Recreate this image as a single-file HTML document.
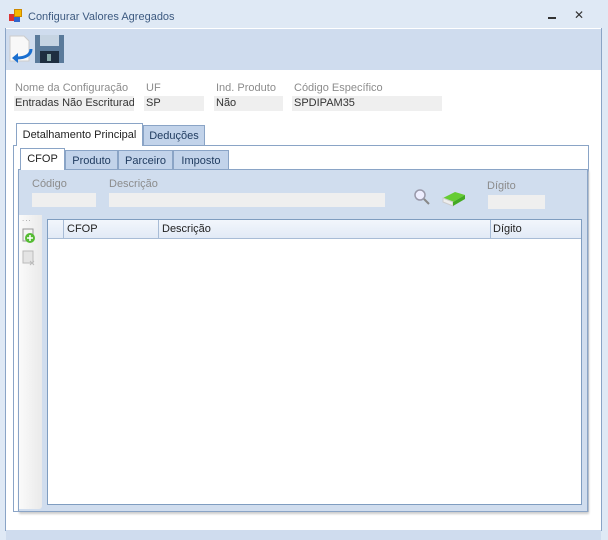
<!DOCTYPE html>
<html><head><meta charset="utf-8"><style>
*{margin:0;padding:0;box-sizing:border-box}
body{width:608px;height:540px;background:#dfe9f5;font-family:"Liberation Sans",sans-serif;font-size:11px;position:relative;overflow:hidden;color:#333}
.a{position:absolute}
.lbl{color:#8c8c8c;font-size:11px}
.fld{background:#efefef}
.tab{position:absolute;border:1px solid #8aa4c6;border-bottom:none;background:#c2d3ea;color:#1e3a5e;font-size:11px;text-align:center;padding-top:4px}
</style></head><body>
<div class="a" style="left:9px;top:9px;width:14px;height:14px">
<div class="a" style="left:0;top:5px;width:7px;height:7px;background:#d33"></div>
<div class="a" style="left:5px;top:0;width:8px;height:8px;background:#f5b800;border:1px solid #c80"></div>
<div class="a" style="left:5px;top:8px;width:6px;height:5px;background:#36c"></div>
</div>
<div class="a" style="left:28px;top:11px;color:#3d5a80;font-size:11px">Configurar Valores Agregados</div>
<div class="a" style="left:548px;top:17px;width:8px;height:2px;background:#333"></div>
<div class="a" style="left:574px;top:8px;font-size:12px;color:#333">✕</div>
<div class="a" style="left:5px;top:28px;width:597px;height:503px;background:#fff;border-left:1px solid #8aa4c6;border-right:1px solid #8aa4c6"></div>
<div class="a" style="left:6px;top:29px;width:595px;height:41px;background:#cfdcee"></div>
<svg class="a" style="left:7px;top:33px" width="60" height="32">
<path d="M3 3h14l5 5v20H3z" fill="#f8f8f8" stroke="#ccc"/>
<path d="M24 16c0 6-6 9-14 9" stroke="#1a6fd0" stroke-width="3" fill="none"/><path d="M5 25l6-5v10z" fill="#1a6fd0"/>
<rect x="28" y="2" width="29" height="28" fill="#5a7a9a"/><rect x="33" y="2" width="19" height="11" fill="#c6d4e2"/><rect x="33" y="18" width="19" height="12" fill="#1e2e40"/><rect x="40" y="21" width="4" height="7" fill="#8aa"/>
</svg>
<div class="a lbl" style="left:15px;top:82px">Nome da Configuração</div>
<div class="a lbl" style="left:146px;top:82px">UF</div>
<div class="a lbl" style="left:216px;top:82px">Ind. Produto</div>
<div class="a lbl" style="left:294px;top:82px">Código Específico</div>
<div class="a fld" style="left:14px;top:96px;width:120px;height:15px;overflow:hidden;white-space:nowrap;padding:1px 1px">Entradas Não Escriturada</div>
<div class="a fld" style="left:144px;top:96px;width:60px;height:15px;padding:1px 2px">SP</div>
<div class="a fld" style="left:214px;top:96px;width:69px;height:15px;padding:1px 2px">Não</div>
<div class="a fld" style="left:292px;top:96px;width:150px;height:15px;padding:1px 2px">SPDIPAM35</div>
<div class="a" style="left:13px;top:145px;width:576px;height:367px;border:1px solid #8aa4c6;background:#fff"></div>
<div class="tab" style="left:16px;top:123px;width:127px;height:23px;background:#fff;padding-top:5px;color:#222">Detalhamento Principal</div>
<div class="tab" style="left:143px;top:125px;width:62px;height:20px">Deduções</div>
<div class="a" style="left:18px;top:169px;width:570px;height:343px;border:1px solid #8aa4c6;background:#d0ddee;box-shadow:1px 2px 2px #ccc"></div>
<div class="tab" style="left:20px;top:148px;width:45px;height:22px;background:#fff;color:#222">CFOP</div>
<div class="tab" style="left:65px;top:150px;width:53px;height:19px">Produto</div>
<div class="tab" style="left:118px;top:150px;width:55px;height:19px">Parceiro</div>
<div class="tab" style="left:173px;top:150px;width:56px;height:19px">Imposto</div>
<div class="a lbl" style="left:32px;top:178px">Código</div>
<div class="a lbl" style="left:109px;top:178px">Descrição</div>
<div class="a lbl" style="left:487px;top:180px">Dígito</div>
<div class="a fld" style="left:32px;top:193px;width:64px;height:14px"></div>
<div class="a fld" style="left:109px;top:193px;width:276px;height:14px"></div>
<div class="a fld" style="left:488px;top:195px;width:57px;height:14px"></div>
<svg class="a" style="left:413px;top:188px" width="56" height="20">
<circle cx="7" cy="7" r="5" fill="#eef" stroke="#99a" stroke-width="1.5"/><path d="M11 11l5 5" stroke="#888" stroke-width="2"/>
<path d="M30 10l12-6 10 3-12 7z" fill="#6c3"/><path d="M30 10l10 4v4l-10-4z" fill="#eee" stroke="#ccc"/><path d="M40 14l12-7v4l-12 7z" fill="#4a2"/>
</svg>
<div class="a" style="left:19px;top:215px;width:23px;height:294px;background:linear-gradient(90deg,#fafafa,#eaeaea);border-radius:0 0 3px 0"></div>
<div class="a" style="left:22px;top:214px;color:#999;font-size:8px;letter-spacing:1px">...</div>
<svg class="a" style="left:21px;top:228px" width="16" height="40">
<rect x="2" y="1" width="10" height="12" fill="#f4f4f4" stroke="#999"/><circle cx="9" cy="10" r="5" fill="#5b3"/><path d="M9 7v6M6 10h6" stroke="#fff" stroke-width="1.5"/>
<rect x="2" y="23" width="10" height="12" fill="#e4e4e4" stroke="#bbb"/><path d="M9 33l4 4M13 33l-4 4" stroke="#bbb"/>
</svg>
<div class="a" style="left:47px;top:219px;width:535px;height:286px;border:1px solid #7f9dc0;background:#fff"></div>
<div class="a" style="left:48px;top:220px;width:533px;height:19px;background:linear-gradient(#f2f6fc,#e2eaf6);border-bottom:1px solid #a8bcd6"></div>
<div class="a" style="left:63px;top:220px;width:1px;height:19px;background:#a8bcd6"></div>
<div class="a" style="left:158px;top:220px;width:1px;height:19px;background:#a8bcd6"></div>
<div class="a" style="left:490px;top:220px;width:1px;height:19px;background:#a8bcd6"></div>
<div class="a" style="left:67px;top:223px;color:#222">CFOP</div>
<div class="a" style="left:162px;top:223px;color:#222">Descrição</div>
<div class="a" style="left:493px;top:223px;color:#222">Dígito</div>
<div class="a" style="left:6px;top:530px;width:595px;height:10px;background:#cfdcee"></div>
</body></html>
